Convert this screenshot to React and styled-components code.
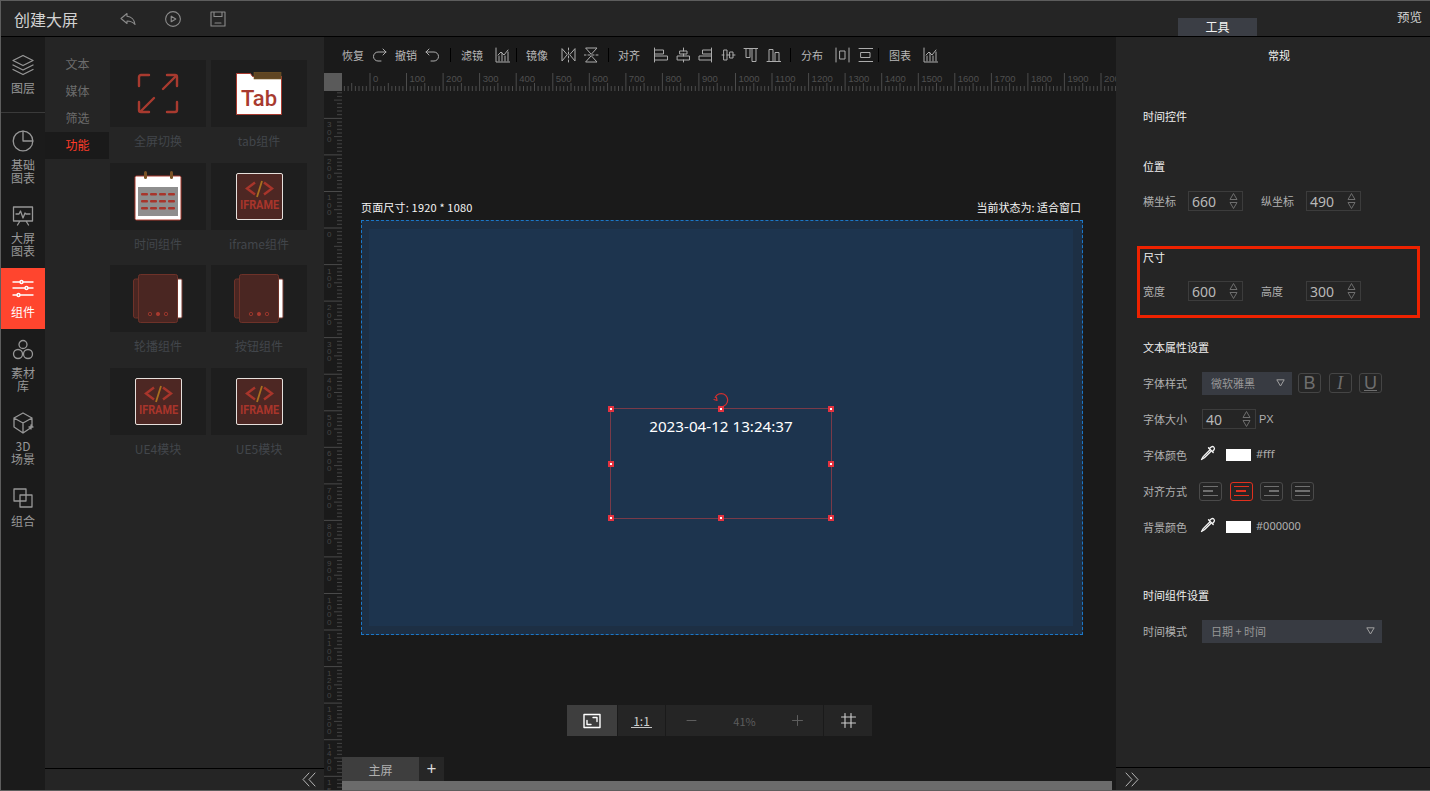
import React from "react";
import styled, { createGlobalStyle } from "styled-components";

const FONT = `"Noto Sans CJK SC", "Noto Sans", "Liberation Sans", sans-serif`;
const STEP = 3.655;

const GlobalStyle = createGlobalStyle`
  html, body { margin: 0; padding: 0; background: #252525; }
  * { box-sizing: border-box; }
  body { font-family: ${FONT}; font-size: 12px; overflow: hidden; }
`;

const Page = styled.div`
  width: 1430px;
  height: 791px;
  display: flex;
  flex-direction: column;
  border: 1px solid #5d5d5d;
  border-right: none;
  background: #252525;
  overflow: hidden;
`;

const Header = styled.header`
  height: 36px;
  flex: none;
  display: flex;
  align-items: flex-end;
  border-bottom: 1px solid #000;
  background: #252525;
`;

const AppTitle = styled.div`
  align-self: center;
  margin-left: 13px;
  margin-right: 42px;
  font-size: 16px;
  line-height: 20px;
  color: #d2d2d2;
`;

const HeaderIcon = styled.button`
  align-self: center;
  width: 16px;
  height: 16px;
  padding: 0;
  margin-right: 29px;
  border: none;
  background: none;
  display: flex;
  color: #8b8b8b;
`;

const HeaderTab = styled.div`
  margin-left: auto;
  width: 79px;
  height: 18px;
  background: #3b3e45;
  color: #f2f2f2;
  line-height: 18px;
  text-align: center;
`;

const Preview = styled.div`
  align-self: center;
  margin: -4px 8px 0 140px;
  color: #d0d0d0;
  font-size: 12.5px;
`;

const Body = styled.div`
  flex: 1;
  min-height: 0;
  display: flex;
`;

const Nav = styled.nav`
  width: 44px;
  flex: none;
  background: #1b1b1b;
  display: flex;
  flex-direction: column;
`;

const NavItem = styled.div`
  height: ${(p) => p.$h}px;
  flex: none;
  padding-top: ${(p) => p.$top}px;
  display: flex;
  flex-direction: column;
  align-items: center;
  color: ${(p) => (p.$active ? "#fff" : "#979797")};
  background: ${(p) => (p.$active ? "#ff452e" : "transparent")};
  border-bottom: ${(p) => (p.$line ? "1px solid #3a3a3a" : "none")};
  font-size: 12px;
  line-height: 13px;
  text-align: center;
  span { margin-top: ${(p) => p.$gap ?? 5}px; width: 26px; }
`;

const LeftPanel = styled.aside`
  width: 279px;
  flex: none;
  display: flex;
  flex-direction: column;
  background: #252525;
`;

const LeftTop = styled.div`
  flex: 1;
  display: flex;
  min-height: 0;
`;

const SubNav = styled.div`
  width: 64px;
  flex: none;
  padding-top: 14px;
`;

const SubItem = styled.div`
  height: 27px;
  line-height: 26px;
  padding-left: 1px;
  text-align: center;
  color: ${(p) => (p.$active ? "#ff3b28" : "#6c6c6c")};
  background: ${(p) => (p.$active ? "#1a1a1a" : "transparent")};
`;

const CardGrid = styled.div`
  display: grid;
  grid-template-columns: 96px 96px;
  grid-auto-rows: 96px;
  column-gap: 5px;
  row-gap: 6.5px;
  padding: 23px 0 0 1px;
`;

const Card = styled.div`
  display: flex;
  flex-direction: column;
`;

const CardArt = styled.div`
  height: 67px;
  flex: none;
  background: #1e1e1e;
  display: flex;
  align-items: center;
  justify-content: center;
`;

const CardLabel = styled.div`
  height: 29px;
  line-height: 27px;
  text-align: center;
  color: #42464b;
`;

const CollapseBar = styled.div`
  height: ${(p) => p.$h}px;
  flex: none;
  display: flex;
  align-items: center;
  justify-content: ${(p) => (p.$right ? "flex-end" : "flex-start")};
  padding: ${(p) => (p.$right ? "0 8px 0 0" : "0 0 0 9px")};
  border-top: 1px solid #000;
  color: #b5b5b5;
`;

const Workspace = styled.main`
  width: 792px;
  flex: none;
  display: flex;
  flex-direction: column;
  background: #1a1a1a;
`;

const Toolbar = styled.div`
  height: 36px;
  flex: none;
  display: flex;
  align-items: center;
  padding: 0 0 1px 18px;
`;

const ToolLabel = styled.span`
  color: #b8b8b8;
  font-size: 11px;
  width: 22px;
  white-space: nowrap;
  margin-left: ${(p) => p.$ml ?? 0}px;
`;

const ToolIcon = styled.span`
  display: flex;
  width: 15px;
  height: 16px;
  margin-left: ${(p) => p.$ml ?? 8}px;
  color: #acacac;
`;

const ToolSep = styled.i`
  width: 1px;
  height: 14px;
  background: #000;
  margin: 0 ${(p) => p.$r ?? 10}px 0 ${(p) => p.$l ?? 10}px;
`;

const RulerRow = styled.div`
  height: 18px;
  flex: none;
  display: flex;
`;

const RulerCorner = styled.div`
  width: 18px;
  height: 18px;
  background: #5a5a5a;
`;

const WorkRow = styled.div`
  flex: 1;
  min-height: 0;
  display: flex;
`;

const StageColumn = styled.div`
  flex: 1;
  min-width: 0;
  display: flex;
  flex-direction: column;
`;

const Stage = styled.div`
  flex: 1;
  min-height: 0;
  padding: 109px 0 0 19px;
`;

const CanvasInfo = styled.div`
  width: 722px;
  height: 14px;
  margin-bottom: 6px;
  display: flex;
  justify-content: space-between;
  align-items: center;
  padding-right: 2px;
  color: #f5f5f5;
  font-size: 11px;
  line-height: 14px;
`;

const PageSize = styled.span`
  letter-spacing: 0.18px;
`;

const Canvas = styled.div`
  position: relative;
  width: 722px;
  height: 415px;
  border: 1px dashed #1b78c9;
  background: #1d2f44;
  padding: 8px 9px 8px 7px;
`;

const CanvasInner = styled.div`
  width: 100%;
  height: 100%;
  background: #1d344e;
`;

const Selection = styled.div`
  position: absolute;
  left: 248px;
  top: 187px;
  width: 222px;
  height: 111px;
  border: 1px solid #7a3a48;
  padding-top: 6px;
  text-align: center;
  color: #fff;
  font-family: "Noto Sans", "Liberation Sans", sans-serif;
  font-size: 15.2px;
  line-height: 22px;
`;

const Handle = styled.i`
  position: absolute;
  left: ${(p) => p.$x}%;
  top: ${(p) => p.$y}%;
  width: 6px;
  height: 6px;
  margin: -3px 0 0 -3px;
  background: #fff;
  border: 2px solid #e5323f;
`;

const RotateMark = styled.span`
  position: absolute;
  left: 102px;
  top: -17px;
  display: flex;
  color: #d4302e;
`;

const ZoomBar = styled.div`
  height: 31px;
  margin: 70px 0 0 206px;
  display: flex;
  gap: 1px;
`;

const ZoomButton = styled.div`
  width: ${(p) => p.$w}px;
  background: ${(p) => (p.$active ? "#3e3e3e" : "#252525")};
  display: flex;
  align-items: center;
  justify-content: ${(p) => (p.$spread ? "space-between" : "center")};
  padding: ${(p) => (p.$spread ? "0 20px" : "0")};
  color: ${(p) => (p.$dim ? "#5d5d5d" : p.$active ? "#fff" : "#cfcfcf")};
  font-size: ${(p) => (p.$spread ? 11 : 12)}px;
`;

const OneToOne = styled.span`
  border-bottom: 1px solid #c4c4c4;
  line-height: 13px;
  padding: 0 2px;
`;

const ScreenTabs = styled.div`
  height: 24px;
  flex: none;
  display: flex;
`;

const ScreenTab = styled.div`
  width: 77px;
  background: #3e3e3e;
  color: #b0b0b0;
  line-height: 26px;
  text-align: center;
`;

const AddTab = styled.div`
  width: 25px;
  background: #262626;
  color: #ddd;
  font-size: 17px;
  line-height: 22px;
  text-align: center;
`;

const Scrollbar = styled.div`
  height: 9px;
  flex: none;
  margin-right: 4px;
  background: #6b6b6b;
`;

const RightPanel = styled.aside`
  flex: 1;
  min-width: 0;
  display: flex;
  flex-direction: column;
  background: #252525;
`;

const Props = styled.div`
  flex: 1;
  min-height: 0;
  padding: 8px 0 0 27px;
`;

const PanelCaption = styled.div`
  height: 20px;
  line-height: 20px;
  padding-right: 15px;
  text-align: center;
  color: #f2f2f2;
  font-size: 11px;
`;

const SectionTitle = styled.div`
  height: 16px;
  line-height: 16px;
  margin-top: ${(p) => p.$top}px;
  color: #f0f0f0;
  font-size: 11px;
`;

const FieldRow = styled.div`
  display: flex;
  align-items: center;
  height: ${(p) => p.$h ?? 24}px;
  margin-top: ${(p) => p.$top ?? 12}px;
`;

const FieldLabel = styled.label`
  width: ${(p) => p.$w ?? 59}px;
  margin-left: ${(p) => p.$ml ?? 0}px;
  flex: none;
  color: #b0b0b0;
  font-size: 11px;
  white-space: nowrap;
`;

const NumberField = styled.div`
  width: ${(p) => p.$w ?? 55}px;
  height: 20px;
  border: 1px solid #3c3c3c;
  display: flex;
  align-items: center;
  justify-content: space-between;
  padding: 0 4px 0 3px;
  color: #b8b8b8;
  font-family: "Noto Sans", "Liberation Sans", sans-serif;
  font-size: 14px;
`;

const Highlight = styled.div`
  width: 283px;
  height: 72px;
  margin: 35px 0 0 -6px;
  padding: 0 0 0 3px;
  border: 3px solid #ee2200;
`;

const SelectBox = styled.div`
  width: ${(p) => p.$w}px;
  height: 23px;
  flex: none;
  display: flex;
  align-items: center;
  justify-content: space-between;
  padding: 0 7px 0 9px;
  background: #383b42;
  color: #979797;
  font-size: 11px;
`;

const StyleGroup = styled.div`
  display: flex;
  gap: 7.5px;
  margin-left: 6px;
`;

const StyleButton = styled.div`
  width: 23px;
  height: 20px;
  border: 1px solid #454545;
  border-radius: 3px;
  display: flex;
  align-items: center;
  justify-content: center;
  color: #6e6e6e;
  font-family: ${(p) => (p.$serif ? `"Liberation Serif", serif` : `"Liberation Sans", sans-serif`)};
  font-style: ${(p) => (p.$serif ? "italic" : "normal")};
  font-size: 18px;
  text-decoration: ${(p) => (p.$under ? "underline" : "none")};
`;

const Unit = styled.span`
  margin-left: 3px;
  color: #b0b0b0;
  font-family: "Liberation Sans", sans-serif;
  font-size: 11px;
`;

const Dropper = styled.span`
  display: flex;
  width: 16px;
  margin: -4px 10px 0 -2px;
  color: #f5f5f5;
`;

const Swatch = styled.i`
  width: 25px;
  height: 12px;
  margin-top: -1px;
  background: #fff;
`;

const ColorValue = styled.span`
  margin: -3px 0 0 5px;
  color: #b0b0b0;
  font-family: "Noto Sans", "Liberation Sans", sans-serif;
  font-size: 11px;
`;

const AlignGroup = styled.div`
  display: flex;
  gap: 7.6px;
  margin-left: -3px;
`;

const AlignButton = styled.div`
  width: 23px;
  height: 19px;
  border: 1px solid ${(p) => (p.$active ? "#e0301e" : "#4a4a4a")};
  border-radius: 3px;
  display: flex;
  flex-direction: column;
  justify-content: center;
  align-items: ${(p) => p.$align};
  gap: 3px;
  padding: 0 3px;
  i {
    display: block;
    height: 1.5px;
    background: ${(p) => (p.$active ? "#e0301e" : "#707070")};
    width: 15px;
  }
  i:nth-child(2) { width: ${(p) => (p.$align === "stretch" ? 15 : 10)}px; }
`;

const Icon = ({ size = 16, w, h, box, children, sw = 1.2, fill = "none" }) => (
  <svg width={w ?? size} height={h ?? size} viewBox={box ?? "0 0 16 16"} fill={fill} stroke="currentColor" strokeWidth={sw} strokeLinecap="round" strokeLinejoin="round">
    {children}
  </svg>
);

const Spin = () => (
  <svg width="9" height="18" viewBox="0 0 9 18" fill="none" stroke="#6e6e6e">
    <path d="M1 7.500 4.500 1.500 8 7.500Z" />
    <path d="M1 10.500h7L4.500 16.500Z" />
  </svg>
);

const Caret = () => (
  <svg width="9" height="8" viewBox="0 0 9 8" fill="none" stroke="#a0a0a0">
    <path d="M.8.8h7.4L4.500 7Z" />
  </svg>
);

const ChevronsLeft = () => (
  <Icon w={14} h={15} box="0 0 14 15" sw={1}><path d="M7 1 1 7.500 7 14M13 1 7 7.500 13 14" /></Icon>
);

const ChevronsRight = () => (
  <Icon w={14} h={15} box="0 0 14 15" sw={1}><path d="M1 1l6 6.500L1 14M7 1l6 6.500L7 14" /></Icon>
);

const ChartGlyph = () => (
  <Icon w={15} h={16} box="0 0 15 16" sw={1}>
    <path d="M1 1v14h14M4 14V9M7 14V6M10 14V9M13 14V5M3 8l3-3 3 3 4-5" />
  </Icon>
);

const MirrorH = () => (
  <Icon w={15} h={16} box="0 0 15 16" sw={1}>
    <path d="M1 2v12l5-6ZM14 2v12L9 8Z" /><path d="M7.500 1v14" strokeDasharray="2 2" />
  </Icon>
);

const MirrorV = () => (
  <Icon w={15} h={16} box="0 0 15 16" sw={1}>
    <path d="M2 1h11L7.500 7ZM2 15h11L7.500 9Z" /><path d="M0 8h15" strokeDasharray="2 2" />
  </Icon>
);

const alignPaths = [
  "M1.500 1v14M1.500 3h9v4h-9M1.500 9h13v4h-13",
  "M7.500 1v3M7.500 7v2M7.500 13v2M4 4h7v3H4ZM1.500 9h12v4h-12Z",
  "M13.500 1v14M13.500 3h-9v4h9M13.500 9H1v4h12.500",
  "M1 8h2M6 8h3M12 8h2M3 3h3v10H3ZM9 5h3v6H9Z",
  "M1 1.500h14M3 1.500v9h4v-9M9 1.500v13h4v-13",
  "M1 14.500h14M3 14.500v-12h4v12M9 14.500v-9h4v9",
];

const layoutIcon = (d, i) => (
  <ToolIcon key={i} $ml={i === 0 ? 13 : 7.6}>
    <Icon w={15} h={16} box="0 0 15 16" sw={1}><path d={d} /></Icon>
  </ToolIcon>
);

const TopRuler = () => {
  const ticks = [];
  const labels = [];
  for (let i = -7; i < 205; i++) {
    const x = 28 + i * STEP;
    const major = i % 10 === 0 && i >= 0;
    const mid = i % 5 === 0;
    ticks.push(<path key={i} d={`M${x.toFixed(1)} 18V${major ? 0 : mid ? 10 : 13}`} />);
    if (major) {
      labels.push(<text key={i} x={x + 3} y={9}>{i * 10}</text>);
    }
  }
  return (
    <svg width="774" height="18" viewBox="0 0 774 18">
      <g stroke="#4c4c4c" strokeWidth="1">{ticks}</g>
      <g fill="#4f4f4f" fontSize="9.5" fontFamily="Liberation Sans, sans-serif">{labels}</g>
    </svg>
  );
};

const SideRuler = () => {
  const ticks = [];
  const labels = [];
  for (let i = -37; i < 155; i++) {
    const y = 137 + i * STEP;
    const major = i % 10 === 0;
    const mid = i % 5 === 0;
    ticks.push(<path key={i} d={`M18 ${y.toFixed(1)}H${major ? 0 : mid ? 10 : 13}`} stroke={major ? "#4a4a4a" : "#444"} />);
    if (major) {
      String(Math.abs(i * 10)).split("").forEach((c, k) => {
        labels.push(<text key={`${i}-${k}`} x={3} y={y + 9 + k * 7.4}>{c}</text>);
      });
    }
  }
  return (
    <svg width="18" height="699" viewBox="0 0 18 699">
      {ticks}
      <g fill="#464646" fontSize="8" fontFamily="Liberation Sans, sans-serif">{labels}</g>
    </svg>
  );
};

const FullscreenArt = () => (
  <svg width="44" height="42" viewBox="0 0 44 42" fill="none" stroke="#a83a2f" strokeWidth="2.4" strokeLinecap="round" strokeLinejoin="round">
    <path d="M13 2H5a2 2 0 0 0-2 2v9M31 2h8a2 2 0 0 1 2 2v9M41 29v8a2 2 0 0 1-2 2h-8M3 29v8a2 2 0 0 0 2 2h8" />
    <path d="M27 16 40 3M5 38l13-13" />
  </svg>
);

const TabArt = () => (
  <svg width="46" height="44" viewBox="0 0 46 44">
    <path d="M.5 1.500h14l2 3h29v38H.5Z" fill="#fff" stroke="#a83a2f" />
    <rect x="18" y="0" width="27" height="7" fill="#5f4522" stroke="#7a5a28" strokeWidth=".6" />
    <text x="23" y="34" textAnchor="middle" fill="#a83a2f" fontFamily="Roboto, sans-serif" fontSize="22" fontWeight="500">Tab</text>
  </svg>
);

const CalendarArt = () => {
  const dashes = [];
  for (let r = 0; r < 3; r++) {
    for (let c = 0; c < 4; c++) {
      dashes.push(<rect key={`${r}${c}`} x={7 + c * 9} y={22 + r * 7} width="7" height="2.6" rx="1" fill="#a8352b" />);
    }
  }
  return (
    <svg width="48" height="50" viewBox="0 0 48 50">
      <rect x="1" y="5" width="46" height="44" rx="1.5" fill="#fff" stroke="#a83a2f" />
      <rect x="4" y="16" width="40" height="29" fill="#8e8e8e" />
      <rect x="10" y="0" width="3" height="8" rx="1.5" fill="#7a5326" />
      <rect x="36" y="0" width="3" height="8" rx="1.5" fill="#7a5326" />
      {dashes}
    </svg>
  );
};

const IframeArt = () => (
  <svg width="47" height="47" viewBox="0 0 47 47">
    <rect x=".5" y=".5" width="46" height="46" rx="1.5" fill="#4d2723" stroke="#e6e0dc" />
    <path d="M19 9.500 11 15.500l8 6M28 9.500l8 6-8 6" fill="none" stroke="#a8352b" strokeWidth="2.4" />
    <path d="M26 8 21 24" stroke="#a8701f" strokeWidth="1.8" />
    <text x="4" y="36" textLength="39" lengthAdjust="spacingAndGlyphs" fill="#a8352b" fontFamily="Roboto, sans-serif" fontSize="12" fontWeight="700">IFRAME</text>
  </svg>
);

const CarouselArt = ({ dot }) => (
  <svg width="50" height="49" viewBox="0 0 50 49">
    <rect x="43" y="5" width="6" height="39" rx="1" fill="#fff" stroke="#7a3a30" />
    <rect x=".5" y="5" width="8" height="39" rx="2" fill="#4a2622" stroke="#6e3229" />
    <rect x="5.500" y=".5" width="39" height="48" rx="2" fill="#4a2622" stroke="#6e3229" />
    {[0, 1, 2].map((i) => (
      <circle key={i} cx={17 + i * 8} cy="40" r="1.7" fill={i === dot ? "#a83a2f" : "none"} stroke="#a83a2f" strokeWidth=".8" />
    ))}
  </svg>
);

const cards = [
  { label: "全屏切换", art: <FullscreenArt /> },
  { label: "tab组件", art: <TabArt /> },
  { label: "时间组件", art: <CalendarArt /> },
  { label: "iframe组件", art: <IframeArt /> },
  { label: "轮播组件", art: <CarouselArt dot={1} /> },
  { label: "按钮组件", art: <CarouselArt dot={1} /> },
  { label: "UE4模块", art: <IframeArt /> },
  { label: "UE5模块", art: <IframeArt /> },
];

const handles = [
  [0, 0], [50, 0], [100, 0], [0, 50], [100, 50], [0, 100], [50, 100], [100, 100],
];

const DropperIcon = () => (
  <Icon size={16} sw={1.3}>
    <path d="M9.500 3.500 11.500 1.800a2 2 0 0 1 2.700 2.700L12.500 6.500" />
    <path d="M8.500 2.800l4.700 4.700" />
    <path d="M9.800 5 3.200 11.600 1.500 14.500 4.400 12.800 11 6.200" />
  </Icon>
);

export default function App() {
  return (
    <Page>
      <GlobalStyle />
      <Header>
        <AppTitle>创建大屏</AppTitle>
        <HeaderIcon>
          <Icon sw={1.1}><path d="M7 2.500 1 7.500l6 5V10c3 0 5.500.8 8 3.500C14.500 8.500 11 5.500 7 5.200Z" /></Icon>
        </HeaderIcon>
        <HeaderIcon>
          <Icon sw={1.1}><circle cx="8" cy="8" r="7.400" /><path d="M6.200 5.200v5.600L10.800 8Z" /></Icon>
        </HeaderIcon>
        <HeaderIcon>
          <Icon sw={1.1}><path d="M1 1h14v14H1ZM4 1v4.500h8V1M5 12h6" /></Icon>
        </HeaderIcon>
        <HeaderTab>工具</HeaderTab>
        <Preview>预览</Preview>
      </Header>
      <Body>
        <Nav>
          <NavItem $h={76} $top={17} $line>
            <Icon size={22} box="0 0 22 22" sw={1.3}>
              <path d="M11 1.500 21 6.500 11 11.500 1 6.500ZM1 11l10 5 10-5M1 15.500l10 5 10-5" />
            </Icon>
            <span>图层</span>
          </NavItem>
          <NavItem $h={79} $top={17} $gap={6}>
            <Icon size={22} box="0 0 22 22" sw={1.3}>
              <circle cx="11" cy="11" r="9.800" /><path d="M11 1.200V11h9.800" />
            </Icon>
            <span>基础图表</span>
          </NavItem>
          <NavItem $h={76} $top={13} $gap={4}>
            <Icon size={22} box="0 0 22 22" sw={1.3}>
              <path d="M1.500 2h19v14h-19ZM8 16l-2.500 4M14 16l2.500 4M4 9h3l1.500-3 2.500 7 2-5 1 1h4" />
            </Icon>
            <span>大屏图表</span>
          </NavItem>
          <NavItem $h={61} $top={10} $active $gap={5}>
            <Icon size={22} box="0 0 22 22" sw={1.4}>
              <path d="M1 4h7M11 4h10M1 10h12M16 10h5M1 17h4M8 17h13" />
              <circle cx="9.500" cy="4" r="1.500" /><circle cx="14.500" cy="10" r="1.500" /><circle cx="6.500" cy="17" r="1.500" />
            </Icon>
            <span>组件</span>
          </NavItem>
          <NavItem $h={72} $top={10}>
            <Icon size={22} box="0 0 22 22" sw={1.3}>
              <circle cx="11" cy="5.500" r="4" /><circle cx="6" cy="15" r="4.500" /><circle cx="16" cy="15" r="4.500" />
            </Icon>
            <span>素材库</span>
          </NavItem>
          <NavItem $h={75} $top={11}>
            <Icon size={22} box="0 0 22 22" sw={1.3}>
              <path d="M11 1 20 6v9l-9 6-9-6V6ZM2 6l9 5 9-5M11 11v10M17 15h4M19 13v4" />
            </Icon>
            <span>3D场景</span>
          </NavItem>
          <NavItem $h={60} $top={11}>
            <Icon size={22} box="0 0 22 22" sw={1.3}>
              <path d="M2 2h12v12H2ZM8 8h12v12H8Z" />
            </Icon>
            <span>组合</span>
          </NavItem>
        </Nav>
        <LeftPanel>
          <LeftTop>
            <SubNav>
              <SubItem>文本</SubItem>
              <SubItem>媒体</SubItem>
              <SubItem>筛选</SubItem>
              <SubItem $active>功能</SubItem>
            </SubNav>
            <CardGrid>
              {cards.map((c) => (
                <Card key={c.label}>
                  <CardArt>{c.art}</CardArt>
                  <CardLabel>{c.label}</CardLabel>
                </Card>
              ))}
            </CardGrid>
          </LeftTop>
          <CollapseBar $h={22} $right><ChevronsLeft /></CollapseBar>
        </LeftPanel>
        <Workspace>
          <Toolbar>
            <ToolLabel>恢复</ToolLabel>
            <ToolIcon><Icon w={15} h={16} box="0 0 15 16" sw={1}><path d="M14 5H6a4.500 4.500 0 0 0 0 9h3M11 2l3 3-3 3" /></Icon></ToolIcon>
            <ToolLabel $ml={8}>撤销</ToolLabel>
            <ToolIcon><Icon w={15} h={16} box="0 0 15 16" sw={1}><path d="M1 5h8a4.500 4.500 0 0 1 0 9H6M4 2 1 5l3 3" /></Icon></ToolIcon>
            <ToolSep />
            <ToolLabel>滤镜</ToolLabel>
            <ToolIcon $ml={12}><ChartGlyph /></ToolIcon>
            <ToolSep $l={6} $r={9} />
            <ToolLabel>镜像</ToolLabel>
            <ToolIcon $ml={13}><MirrorH /></ToolIcon>
            <ToolIcon><MirrorV /></ToolIcon>
            <ToolSep $l={9} $r={9} />
            <ToolLabel>对齐</ToolLabel>
            {alignPaths.map(layoutIcon)}
            <ToolSep $l={9} />
            <ToolLabel>分布</ToolLabel>
            <ToolIcon $ml={12}>
              <Icon w={15} h={16} box="0 0 15 16" sw={1}><path d="M1 1v14M14 1v14M5 4h5v8H5Z" /></Icon>
            </ToolIcon>
            <ToolIcon $ml={8}>
              <Icon w={15} h={16} box="0 0 15 16" sw={1}><path d="M1 1.500h14M1 14.500h14M3 5.500h9v5H3Z" /></Icon>
            </ToolIcon>
            <ToolSep $l={5} />
            <ToolLabel>图表</ToolLabel>
            <ToolIcon $ml={12}><ChartGlyph /></ToolIcon>
          </Toolbar>
          <RulerRow>
            <RulerCorner />
            <TopRuler />
          </RulerRow>
          <WorkRow>
            <SideRuler />
            <StageColumn>
              <Stage>
                <CanvasInfo>
                  <PageSize>页面尺寸: 1920 * 1080</PageSize>
                  <span>当前状态为: 适合窗口</span>
                </CanvasInfo>
                <Canvas>
                  <CanvasInner />
                  <Selection>
                    <RotateMark>
                      <Icon size={16} sw={1.2}><path d="M2.200 5.500A6.500 6.500 0 1 1 6 14.200M1 7.500l3 1-.5-3" /></Icon>
                    </RotateMark>
                    2023-04-12 13:24:37
                    {handles.map(([x, y]) => (
                      <Handle key={`${x}-${y}`} $x={x} $y={y} />
                    ))}
                  </Selection>
                </Canvas>
                <ZoomBar>
                  <ZoomButton $w={50} $active>
                    <Icon w={18} h={16} box="0 0 18 16" sw={1.4}>
                      <path d="M1 1.500h16v13H1ZM10 4.500h4v4M8 11.500H4v-4" />
                    </Icon>
                  </ZoomButton>
                  <ZoomButton $w={47}><OneToOne>1:1</OneToOne></ZoomButton>
                  <ZoomButton $w={157} $spread $dim>
                    <Icon size={11} box="0 0 11 11" sw={1}><path d="M1 5.500h9" /></Icon>
                    <span>41%</span>
                    <Icon size={11} box="0 0 11 11" sw={1}><path d="M.5 5.500h10M5.500.5v10" /></Icon>
                  </ZoomButton>
                  <ZoomButton $w={48}>
                    <Icon size={15} box="0 0 15 15" sw={1.1}><path d="M4 .5v14M10 .5v14M.5 4h14M.5 10h14" /></Icon>
                  </ZoomButton>
                </ZoomBar>
              </Stage>
              <ScreenTabs>
                <ScreenTab>主屏</ScreenTab>
                <AddTab>+</AddTab>
              </ScreenTabs>
              <Scrollbar />
            </StageColumn>
          </WorkRow>
        </Workspace>
        <RightPanel>
          <Props>
            <PanelCaption>常规</PanelCaption>
            <SectionTitle $top={43}>时间控件</SectionTitle>
            <SectionTitle $top={34}>位置</SectionTitle>
            <FieldRow $h={20} $top={17}>
              <FieldLabel $w={45}>横坐标</FieldLabel>
              <NumberField>660<Spin /></NumberField>
              <FieldLabel $w={45} $ml={18}>纵坐标</FieldLabel>
              <NumberField>490<Spin /></NumberField>
            </FieldRow>
            <Highlight>
              <SectionTitle $top={0}>尺寸</SectionTitle>
              <FieldRow $h={20} $top={16}>
                <FieldLabel $w={45}>宽度</FieldLabel>
                <NumberField>600<Spin /></NumberField>
                <FieldLabel $w={45} $ml={18}>高度</FieldLabel>
                <NumberField>300<Spin /></NumberField>
              </FieldRow>
            </Highlight>
            <SectionTitle $top={21}>文本属性设置</SectionTitle>
            <FieldRow $top={16}>
              <FieldLabel>字体样式</FieldLabel>
              <SelectBox $w={90}>微软雅黑<Caret /></SelectBox>
              <StyleGroup>
                <StyleButton>B</StyleButton>
                <StyleButton $serif>I</StyleButton>
                <StyleButton $under>U</StyleButton>
              </StyleGroup>
            </FieldRow>
            <FieldRow>
              <FieldLabel>字体大小</FieldLabel>
              <NumberField $w={54}>40<Spin /></NumberField>
              <Unit>PX</Unit>
            </FieldRow>
            <FieldRow>
              <FieldLabel>字体颜色</FieldLabel>
              <Dropper><DropperIcon /></Dropper>
              <Swatch />
              <ColorValue>#fff</ColorValue>
            </FieldRow>
            <FieldRow>
              <FieldLabel>对齐方式</FieldLabel>
              <AlignGroup>
                <AlignButton $align="flex-start"><i /><i /><i /></AlignButton>
                <AlignButton $align="center" $active><i /><i /><i /></AlignButton>
                <AlignButton $align="flex-end"><i /><i /><i /></AlignButton>
                <AlignButton $align="stretch"><i /><i /><i /></AlignButton>
              </AlignGroup>
            </FieldRow>
            <FieldRow>
              <FieldLabel>背景颜色</FieldLabel>
              <Dropper><DropperIcon /></Dropper>
              <Swatch />
              <ColorValue>#000000</ColorValue>
            </FieldRow>
            <SectionTitle $top={48}>时间组件设置</SectionTitle>
            <FieldRow $top={16}>
              <FieldLabel>时间模式</FieldLabel>
              <SelectBox $w={180}>日期 + 时间<Caret /></SelectBox>
            </FieldRow>
          </Props>
          <CollapseBar $h={23}><ChevronsRight /></CollapseBar>
        </RightPanel>
      </Body>
    </Page>
  );
}
